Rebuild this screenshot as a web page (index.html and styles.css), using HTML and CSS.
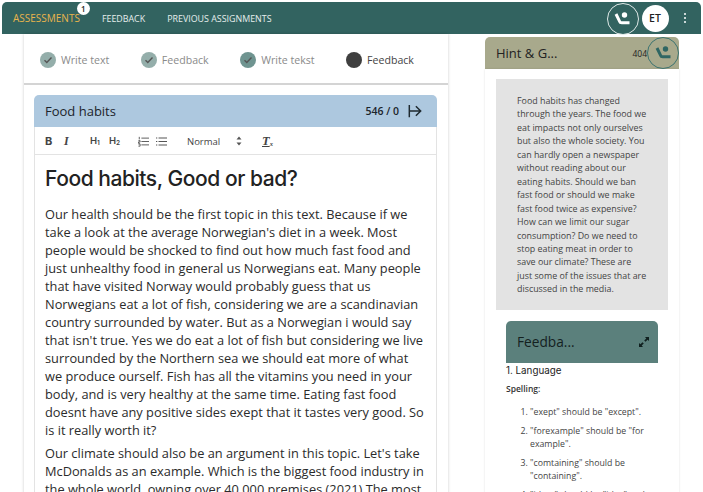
FILE: index.html
```html
<!DOCTYPE html>
<html lang="en">
<head>
  <meta charset="UTF-8">
  <title>Assessments</title>
  <link rel="stylesheet" href="styles.css">
</head>
<body>

<nav class="topbar">
  <a class="nav-link active">ASSESSMENTS<span class="badge">1</span></a>
  <a class="nav-link">FEEDBACK</a>
  <a class="nav-link">PREVIOUS ASSIGNMENTS</a>
  <div class="nav-right">
    <span class="call-btn light">
      <svg width="17" height="14" viewBox="0 0 17 14"><circle cx="10.500" cy="3" r="2.700" fill="currentColor"/><path d="M2 2l3.500 7.200Q6 10.800 7.800 10.800H15.500" fill="none" stroke="currentColor" stroke-width="3"/></svg>
    </span>
    <span class="avatar">ET</span>
    <span class="dots"><i></i><i></i><i></i></span>
  </div>
</nav>

<div class="columns">
  <main class="left">
    <div class="stepper">
      <div class="step"><span class="step-dot"><svg width="10" height="10" viewBox="0 0 10 10"><path d="M1.500 5.200l2.300 2.300 4.700-5" fill="none" stroke="#555" stroke-width="1.400"/></svg></span>Write text</div>
      <div class="step"><span class="step-dot"><svg width="10" height="10" viewBox="0 0 10 10"><path d="M1.500 5.200l2.300 2.300 4.700-5" fill="none" stroke="#555" stroke-width="1.400"/></svg></span>Feedback</div>
      <div class="step"><span class="step-dot dark"><svg width="10" height="10" viewBox="0 0 10 10"><path d="M1.500 5.200l2.300 2.300 4.700-5" fill="none" stroke="#555" stroke-width="1.400"/></svg></span>Write tekst</div>
      <div class="step current"><span class="step-dot now"></span>Feedback</div>
    </div>

    <section class="doc">
      <header class="doc-head">
        <span class="doc-title">Food habits</span>
        <span class="doc-count">546 / 0</span>
        <svg class="doc-arrow" width="14" height="14" viewBox="0 0 16 16"><path d="M1.500 1v14M2 8h12.500M9 2.500L14.500 8 9 13.500" fill="none" stroke="#1f2a30" stroke-width="1.700"/></svg>
      </header>
      <div class="toolbar">
        <span class="tb-b">B</span>
        <span class="tb-i">I</span>
        <span class="tb-h h1">H<sub>1</sub></span>
        <span class="tb-h">H<sub>2</sub></span>
        <svg class="tb-list ol" width="11" height="11" viewBox="0 0 13 12"><path d="M4 2h9M4 6h9M4 10h9M1.500 .5v3M.5 5h2v1.500h-2V8h2M.5 9h2v2.500h-2" fill="none" stroke="#555" stroke-width="1.100"/></svg>
        <svg class="tb-list" width="11" height="11" viewBox="0 0 13 12"><path d="M3 2h10M3 6h10M3 10h10M0 2h1.500M0 6h1.500M0 10h1.500" fill="none" stroke="#555" stroke-width="1.200"/></svg>
        <span class="tb-select">Normal</span>
        <svg class="tb-caret" width="6" height="10" viewBox="0 0 6 10"><path d="M3 .5l2.500 3h-5zM3 9.500l2.500-3h-5z" fill="#555"/></svg>
        <span class="tb-clear"><u>T</u><sub>x</sub></span>
      </div>
      <article class="editor">
        <h1>Food habits, Good or bad?</h1>
        <p>Our health should be the first topic in this text. Because if we take a look at the average Norwegian's diet in a week. Most people would be shocked to find out how much fast food and just unhealthy food in general us Norwegians eat. Many people that have visited Norway would probably guess that us Norwegians eat a lot of fish, considering we are a scandinavian country surrounded by water. But as a Norwegian i would say that isn't true. Yes we do eat a lot of fish but considering we live surrounded by the Northern sea we should eat more of what we produce ourself. Fish has all the vitamins you need in your body, and is very healthy at the same time. Eating fast food doesnt have any positive sides exept that it tastes very good. So is it really worth it?</p>
        <p>Our climate should also be an argument in this topic. Let's take McDonalds as an example. Which is the biggest food industry in the whole world, owning over 40,000 premises (2021) The most</p>
      </article>
    </section>
  </main>

  <aside class="right">
    <header class="hint-head">
      <span class="hint-title">Hint &amp; G...</span>
      <span class="hint-count">404</span>
      <span class="call-btn teal">
        <svg width="17" height="14" viewBox="0 0 17 14"><circle cx="10.500" cy="3" r="2.700" fill="currentColor"/><path d="M2 2l3.500 7.200Q6 10.800 7.800 10.800H15.500" fill="none" stroke="currentColor" stroke-width="3"/></svg>
      </span>
    </header>
    <div class="hint-body">
      <p class="hint-text">Food habits has changed through the years. The food we eat impacts not only ourselves but also the whole society. You can hardly open a newspaper without reading about our eating habits. Should we ban fast food or should we make fast food twice as expensive? How can we limit our sugar consumption? Do we need to stop eating meat in order to save our climate? These are just some of the issues that are discussed in the media.</p>

      <div class="feedback">
        <header class="feedback-head">
          <span>Feedba...</span>
          <svg width="10" height="10" viewBox="0 0 10 10"><path d="M6 0h4v4L8.600 2.700 6.500 4.800 5.200 3.500 7.300 1.400zM4 10H0V6l1.400 1.300 2.100-2.100 1.300 1.300-2.100 2.100z" fill="#10201f"/></svg>
        </header>
        <h4>1. Language</h4>
        <h5>Spelling:</h5>
        <ol>
          <li>"exept" should be "except".</li>
          <li>"forexample" should be "for example".</li>
          <li>"comtaining" should be "containing".</li>
          <li>"idear" should be "idea" and</li>
        </ol>
      </div>
    </div>
  </aside>
</div>

</body>
</html>
```

FILE: styles.css
```css
html, body {
  height: 100%;
  overflow: hidden;
}

body {
  margin: 0;
  font-family: 'Open Sans', sans-serif;
  background-color: #fff;
  color: #333;
}

/* Top bar */
.topbar {
  display: flex;
  align-items: center;
  height: 32px;
  margin: 2px 2px 0 2px;
  padding: 0 0 0 11px;
  background-color: #326360;
  border-radius: 5px 5px 0 0;
}

.nav-link {
  position: relative;
  margin-right: 22px;
  font-size: 8.900px;
  color: #e6eeed;
}

.nav-link.active {
  font-size: 10px;
  color: #e9b44c;
}

.badge {
  position: absolute;
  top: -9px;
  right: -10px;
  width: 13px;
  height: 13px;
  border-radius: 50%;
  background: #fff;
  color: #222;
  font-size: 8px;
  font-weight: 600;
  line-height: 13px;
  text-align: center;
}

.nav-right {
  display: flex;
  align-items: center;
  margin-left: auto;
}

.call-btn {
  display: flex;
  align-items: center;
  justify-content: center;
  flex-shrink: 0;
  width: 30px;
  height: 30px;
  border-radius: 50%;
}

.call-btn.light {
  color: #fff;
  border: 1px solid #dfe9e8;
  margin-top: 1px;
}

.call-btn.teal {
  color: #2f6663;
  border: 1px solid #3d7471;
}

.avatar {
  width: 27px;
  height: 27px;
  margin-left: 3px;
  border-radius: 50%;
  background: #fff;
  color: #222;
  font-size: 10.500px;
  font-weight: 600;
  line-height: 27px;
  text-align: center;
}

.dots {
  display: flex;
  flex-direction: column;
  gap: 1.500px;
  margin: 0 15px 0 15px;
}

.dots i {
  width: 2.500px;
  height: 2.500px;
  background: #fff;
  border-radius: 50%;
}

/* Columns */
.columns {
  display: flex;
  align-items: flex-start;
}

.left {
  width: 424px;
  margin-left: 24px;
  box-shadow: 0 0 3px rgba(0,0,0,0.2);
  padding-bottom: 40px;
}

.stepper {
  display: flex;
  align-items: center;
  height: 51px;
  padding: 3px 0 0 16px;
  border-bottom: 2px solid #d4d4d4;
  box-sizing: border-box;
  font-size: 10.600px;
  color: #8a8a8a;
  white-space: nowrap;
}

.step {
  display: flex;
  align-items: center;
  gap: 5px;
  margin-right: 31.500px;
}

.step-dot {
  display: flex;
  align-items: center;
  justify-content: center;
  width: 16px;
  height: 16px;
  border-radius: 50%;
  background: #94aeaa;
}

.step-dot.dark {
  background: #6f9490;
}

.step-dot.now {
  background: #3f3f3f;
}

.step.current {
  color: #444;
}

/* Document */
.doc {
  margin: 10px 11px 0 10px;
}

.doc-head {
  display: flex;
  align-items: center;
  height: 32px;
  padding: 0 15px 0 11px;
  background-color: #adc8df;
  border-radius: 5px 5px 0 0;
  color: #1c242b;
}

.doc-title {
  font-size: 13px;
}

.doc-count {
  margin-left: auto;
  margin-right: 9px;
  font-size: 10.500px;
  font-weight: 600;
}

.toolbar {
  display: flex;
  align-items: center;
  height: 28px;
  padding: 1px 0 0 10px;
  border-bottom: 1px solid #e3e3e3;
  border-right: 1px solid #e3e3e3;
  border-left: 1px solid #e3e3e3;
  box-sizing: border-box;
  font-family: Inter, sans-serif;
  font-size: 10px;
  color: #444;
}

.tb-b {
  font-size: 11px;
  font-weight: 700;
  width: 19px;
}

.tb-i {
  font-style: italic;
  font-weight: 700;
  font-family: 'Liberation Serif', serif;
  font-size: 12px;
  width: 26px;
}

.tb-h {
  font-weight: 600;
  font-size: 9.500px;
  width: 18px;
}

.tb-h sub {
  font-size: 6.500px;
  vertical-align: -1px;
}

.tb-h.h1 {
  width: 19px;
}

.tb-list {
  margin-right: 7px;
}

.tb-list.ol {
  margin-left: 11px;
}

.tb-select {
  margin-left: 13px;
  font-family: 'Open Sans', sans-serif;
  font-size: 9.500px;
  width: 49px;
}

.tb-caret {
  margin-right: 20px;
}

.tb-clear {
  font-family: 'Liberation Serif', serif;
  font-style: italic;
  font-weight: 700;
  font-size: 12.500px;
}

.tb-clear sub {
  font-size: 6.500px;
  vertical-align: -1px;
}

.editor {
  padding: 0 10px;
  border-left: 1px solid #e3e3e3;
  border-right: 1px solid #e3e3e3;
  color: #2b2b2b;
}

.editor h1 {
  margin: 0;
  padding: 9px 0 12px;
  font-family: Inter, sans-serif;
  font-size: 21px;
  font-weight: 500;
  letter-spacing: -0.450px;
  line-height: 29px;
  color: #222;
}

.editor p {
  margin: 0 0 5px;
  font-size: 12.800px;
  line-height: 18px;
}

/* Right side */
.right {
  width: 194px;
  margin: 3px 0 0 37px;
}

.hint-head {
  display: flex;
  align-items: center;
  height: 32px;
  padding-left: 11px;
  background-color: #a8a98c;
  border-radius: 5px 5px 0 0;
  color: #222;
}

.hint-title {
  font-size: 13px;
}

.hint-count {
  margin-left: auto;
  font-size: 8.500px;
}

.hint-body {
  padding: 10px 11px 0;
  box-shadow: 0 0 2px rgba(0,0,0,0.12);
}

.hint-text {
  margin: 0;
  padding: 15px 21px 14px;
  background-color: #e3e3e3;
  font-size: 8.900px;
  line-height: 13.450px;
  color: #444;
}

.feedback {
  margin: 11px 10px 0;
}

.feedback-head {
  display: flex;
  align-items: center;
  justify-content: space-between;
  height: 42px;
  padding: 0 9px 0 11px;
  background-color: #5b807c;
  border-radius: 5px 5px 0 0;
  color: #14211f;
  font-size: 13.700px;
}

.feedback h4 {
  margin: 0;
  padding-top: 1px;
  font-family: Inter, sans-serif;
  font-size: 9.800px;
  font-weight: 400;
  line-height: 14px;
  color: #222;
}

.feedback h5 {
  margin: 5px 0 11px;
  font-size: 8.500px;
  font-weight: 600;
  line-height: 12px;
  color: #333;
}

.feedback ol {
  margin: 0;
  padding-left: 24px;
  font-size: 8.750px;
  line-height: 13.400px;
  color: #444;
}

.feedback li {
  margin-bottom: 5.500px;
}
```
